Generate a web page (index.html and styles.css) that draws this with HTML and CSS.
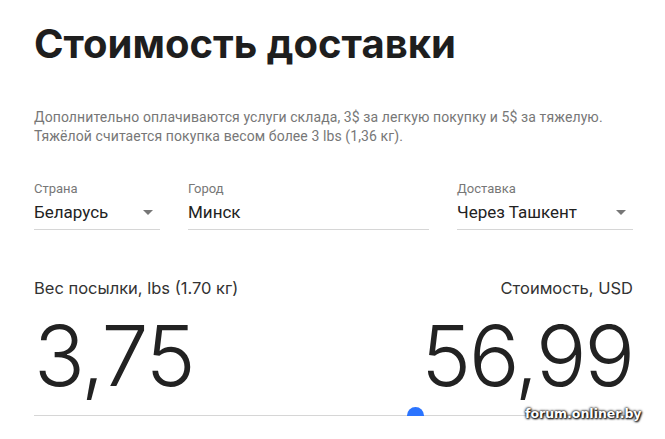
FILE: index.html
```html
<!DOCTYPE html>
<html lang="ru">
<head>
  <meta charset="UTF-8">
  <title>Стоимость доставки</title>
  <link rel="stylesheet" href="styles.css">
</head>
<body>

  <div class="calculator">
    <h1>Стоимость доставки</h1>
    <p class="note">
      Дополнительно оплачиваются услуги склада, 3$ за легкую покупку и 5$ за тяжелую.<br>
      Тяжёлой считается покупка весом более 3 lbs (1,36 кг).
    </p>

    <div class="fields">
      <div class="field field-country">
        <label>Страна</label>
        <div class="value">Беларусь <span class="arrow"></span></div>
      </div>
      <div class="field field-city">
        <label>Город</label>
        <div class="value">Минск</div>
      </div>
      <div class="field field-delivery">
        <label>Доставка</label>
        <div class="value">Через Ташкент <span class="arrow"></span></div>
      </div>
    </div>

    <div class="result">
      <div class="result-head">
        <span>Вес посылки, lbs (1.70 кг)</span>
        <span>Стоимость, USD</span>
      </div>
      <div class="result-numbers">
        <span>3,75</span>
        <span>56,99</span>
      </div>
      <div class="slider">
        <div class="thumb"></div>
      </div>
    </div>
  </div>

  <div class="watermark">forum.onliner.by</div>

</body>
</html>
```
FILE: styles.css
```css
body, html {
  margin: 0;
  background: #fff;
  font-family: Roboto, "Liberation Sans", sans-serif;
  color: #222;
}

.calculator {
  width: 599px;
  padding: 19px 0 0 34px;
}

h1 {
  margin: 0;
  font-family: Inter, Roboto, sans-serif;
  font-size: 40px;
  font-weight: 700;
  line-height: 50px;
  color: #1e1e1e;
}

.note {
  margin: 39px 0 0;
  font-size: 14px;
  letter-spacing: 0.1px;
  line-height: 19px;
  color: #777;
}

.fields {
  display: flex;
  gap: 28px;
  margin-top: 35px;
}

.field {
  border-bottom: 1px solid #d6d6d6;
  padding-bottom: 5px;
}

.field-country { width: 126px; }
.field-city { width: 241px; }
.field-delivery { width: 176px; }

.field label {
  display: block;
  font-size: 13px;
  color: #777;
  line-height: 16px;
}

.field .value {
  display: flex;
  justify-content: space-between;
  align-items: center;
  font-size: 17px;
  line-height: 24px;
  margin-top: 3px;
  color: #222;
}

.arrow {
  width: 0;
  height: 0;
  border-left: 5px solid transparent;
  border-right: 5px solid transparent;
  border-top: 5px solid #777;
  margin-right: 7px;
}

.result {
  margin-top: 47px;
}

.result-head {
  display: flex;
  justify-content: space-between;
  font-family: Inter, Roboto, sans-serif;
  font-size: 16.5px;
  line-height: 22px;
  color: #333;
}

.result-numbers {
  display: flex;
  justify-content: space-between;
  padding-top: 7px;
  font-family: Inter, Roboto, sans-serif;
  font-size: 84px;
  font-weight: 300;
  line-height: 100px;
  letter-spacing: -2px;
  color: #222;
}

.slider {
  position: relative;
  height: 1px;
  background: #d6d6d6;
  margin-top: 9px;
}

.thumb {
  position: absolute;
  left: 373px;
  top: -8px;
  width: 17px;
  height: 17px;
  border-radius: 50%;
  background: #2b74ff;
}

.watermark {
  position: absolute;
  left: 525px;
  top: 406px;
  font-family: "DejaVu Sans", sans-serif;
  font-weight: 700;
  font-size: 12.5px;
  color: #fff;
  text-shadow: 0 0 2px #000, 0 0 3px #000, 1px 1px 2px #000;
}
```
